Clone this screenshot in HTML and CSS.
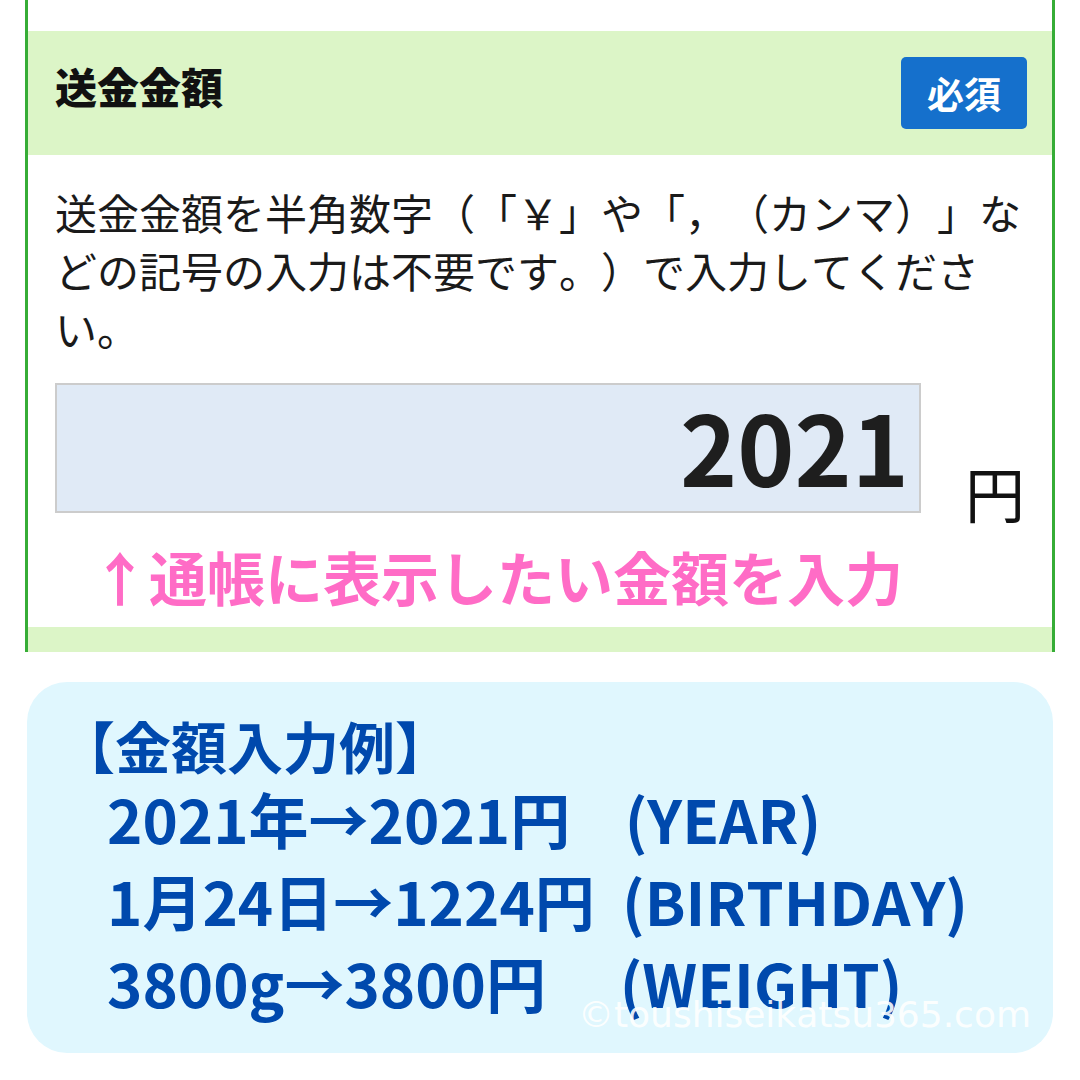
FILE: index.html
```html
<!DOCTYPE html>
<html lang="ja">
<head>
<meta charset="utf-8">
<title>送金金額</title>
<link rel="stylesheet" href="styles.css">
</head>
<body>
<div class="panel">
  <div class="gap-top"></div>
  <div class="head">
    <div class="title">送金金額</div>
    <div class="badge">必須</div>
  </div>
  <div class="body">
    <p class="desc">送金金額を半角数字（「￥」や「，（カンマ）」などの記号の入力は不要です。）で入力してください。</p>
    <div class="input-row">
      <div class="amount">2021</div>
      <div class="yen">円</div>
    </div>
    <div class="note">↑通帳に表示したい金額を入力</div>
  </div>
  <div class="band"></div>
</div>
<div class="example">
  <div class="ex-head">【金額入力例】</div>
  <div class="ex-line">2021年→2021円    (YEAR)</div>
  <div class="ex-line">1月24日→1224円  (BIRTHDAY)</div>
  <div class="ex-line">3800g→3800円　 (WEIGHT)</div>
  <div class="mark">©toushiseikatsu365.com</div>
</div>
</body>
</html>
```
FILE: styles.css
```css
html, body {
  margin: 0;
  padding: 0;
  background: #ffffff;
}
body {
  width: 1080px;
  height: 1080px;
  overflow: hidden;
  font-family: "Noto Sans CJK JP", "Noto Sans", sans-serif;
  text-spacing-trim: space-all;
  font-kerning: none;
}
.panel {
  margin: 0 25px;
  border-left: 3px solid #36ad36;
  border-right: 3px solid #36ad36;
}
.gap-top {
  height: 31px;
}
.head {
  height: 124px;
  box-sizing: border-box;
  background: #dcf5c7;
  display: flex;
  justify-content: space-between;
  align-items: flex-start;
  padding: 26px 25px 0 27px;
}
.title {
  margin-top: 4px;
  font-size: 42px;
  line-height: 50px;
  font-weight: 900;
  color: #111111;
}
.badge {
  width: 126px;
  height: 72px;
  border-radius: 5px;
  background: #1570cc;
  color: #ffffff;
  font-size: 37px;
  font-weight: 700;
  display: flex;
  align-items: center;
  justify-content: center;
}
.body {
  padding: 28px 0 16px 27px;
}
.desc {
  margin: 0;
  width: 985px;
  font-size: 42px;
  line-height: 58px;
  color: #1a1a1a;
}
.input-row {
  margin-top: 26px;
  display: flex;
  align-items: flex-end;
}
.amount {
  width: 866px;
  box-sizing: border-box;
  height: 130px;
  border: 2px solid #cccccc;
  background: #e0eaf6;
  padding: 11px 10px 0 0;
  text-align: right;
  font-size: 97px;
  line-height: 97px;
  font-weight: 700;
  color: #1e1e1e;
}
.yen {
  margin-left: 44px;
  margin-bottom: -14px;
  font-size: 60px;
  line-height: 70px;
  color: #111111;
}
.note {
  margin-top: 28px;
  padding-left: 36px;
  font-size: 58px;
  line-height: 70px;
  font-weight: 700;
  color: #ff6cc6;
}
.band {
  height: 25px;
  background: #dcf5c7;
}
.example {
  position: relative;
  margin: 30px 27px 0;
  height: 371px;
  box-sizing: border-box;
  border-radius: 40px;
  background: #e0f7fe;
  padding: 31px 0 0 32px;
  color: #0049ad;
  font-weight: 700;
}
.ex-head {
  font-size: 56px;
  line-height: 64px;
}
.ex-line {
  margin-left: 48px;
  font-size: 60px;
  line-height: 82px;
  white-space: pre;
}
.mark {
  position: absolute;
  right: 22px;
  bottom: 18px;
  font-family: "DejaVu Sans", sans-serif;
  font-weight: 400;
  font-size: 36px;
  line-height: 40px;
  color: rgba(255, 255, 255, 0.9);
}
```
